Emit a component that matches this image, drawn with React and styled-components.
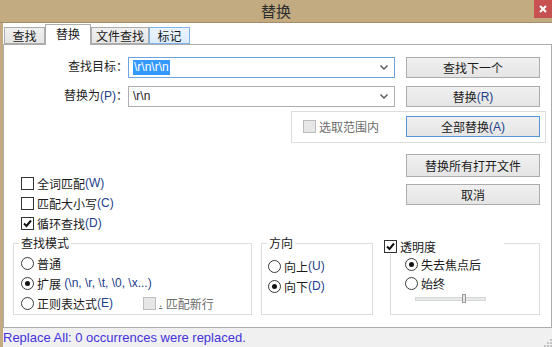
import React from 'react'
import styled, { createGlobalStyle, css } from 'styled-components'

const GlobalStyle = createGlobalStyle`
html, body {
  margin: 0;
  padding: 0;
  background: #fff;
}
body {
  font-family: "Liberation Sans", "Noto Sans CJK SC", sans-serif;
  font-size: 12px;
  color: #1e1e1e;
}
* { box-sizing: border-box; }
`

const Window = styled.div`
width: 552px;
height: 347px;
display: flex;
flex-direction: column;
overflow: hidden;
background: #fff;
`

const TitleBar = styled.div`
flex: none;
height: 23px;
background: #c2ab81;
border-bottom: 1px solid #a48e67;
display: grid;
grid-template-columns: 1fr auto 1fr;
align-items: start;
`

const Title = styled.div`
grid-column: 2;
font-family: "Noto Sans CJK SC", sans-serif;
font-size: 15px;
line-height: 22px;
color: #2e2e2e;
`

const CloseButton = styled.div`
grid-column: 3;
justify-self: end;
width: 18px;
height: 18px;
background: #c75050;
display: flex;
align-items: center;
justify-content: center;
`

const Body = styled.div`
flex: 1;
display: flex;
min-height: 0;
`

const LeftEdge = styled.div`
flex: none;
width: 3px;
background: #c2ab81;
`

const Main = styled.div`
flex: 1;
display: flex;
flex-direction: column;
`

const TabStrip = styled.div`
flex: none;
height: 21px;
display: flex;
align-items: flex-end;
padding-left: 1px;
`

const Tab = styled.div`
position: relative;
width: ${p => p.w}px;
height: ${p => (p.active ? 21 : 17)}px;
margin-bottom: ${p => (p.active ? -1 : 0)}px;
border: 1px solid #acacac;
border-bottom: ${p => (p.active ? 'none' : '1px solid #acacac')};
background: linear-gradient(#f0f0f0, #e5e5e5);
font-family: "Noto Sans CJK SC", sans-serif;
font-size: 12px;
line-height: ${p => (p.active ? 17 : 15)}px;
text-align: center;
color: #1a1a1a;
z-index: ${p => (p.active ? 2 : 1)};
${p => p.active && css`
  background: #fff;
`}
${p => p.hover && css`
  background: linear-gradient(#ecf4fc, #dcecfc);
  border-color: #7eb4ea;
`}
`

const Panel = styled.div`
flex: none;
height: 284px;
border: 1px solid #acacac;
padding-top: 12px;
display: flex;
flex-direction: column;
`

const FieldRow = styled.div`
display: flex;
align-items: center;
height: 21px;
margin-top: ${p => p.mt || 0}px;
`

const FieldLabel = styled.div`
width: 124px;
text-align: right;
white-space: nowrap;
line-height: 21px;
`

const Combo = styled.div`
width: 267px;
height: 21px;
border: 1px solid ${p => (p.focused ? '#6fa3df' : '#abadb3')};
display: flex;
align-items: center;
padding: 0 6px 0 4px;
background: #fff;
`

const ComboText = styled.span`
flex: 1;
font-family: "Liberation Sans", sans-serif;
font-size: 12px;
line-height: 15px;
white-space: pre;
${p => p.selected && css`
  flex: none;
  background: #3399ff;
  color: #fff;
  padding: 0 1px;
`}
`

const ComboArrow = styled.svg`
margin-left: auto;
flex: none;
`

const Button = styled.div`
flex: none;
width: 134px;
height: ${p => p.h || 21}px;
margin-left: ${p => p.ml || 0}px;
border: 1px solid ${p => (p.primary ? '#4f97d8' : '#acacac')};
background: linear-gradient(#f0f0f0, #e5e5e5);
display: flex;
align-items: center;
justify-content: center;
white-space: nowrap;
color: #1a1a1a;
`

const Key = styled.span`
color: #22408a;
`

const SelectionGroup = styled.div`
margin: 4px 0 0 287px;
width: 255px;
height: 32px;
border: 1px solid #dcdcdc;
display: grid;
grid-template-columns: 114px 134px;
align-items: center;
padding: 4px 0 5px;
`

const CheckItem = styled.div`
display: flex;
align-items: center;
height: ${p => p.h || 20}px;
padding-left: ${p => p.pl || 0}px;
white-space: nowrap;
color: ${p => (p.disabled ? '#6d6d6d' : '#1a1a1a')};
`

const Box = styled.span`
flex: none;
width: 13px;
height: 13px;
margin-right: 3px;
border: 1px solid ${p => (p.disabled ? '#bcbcbc' : '#333')};
background: ${p => (p.disabled ? '#e6e6e6' : '#fff')};
display: flex;
align-items: center;
justify-content: center;
`

const Radio = styled.span`
flex: none;
width: 13px;
height: 13px;
margin-right: 3px;
border: 1px solid #3a3a3a;
border-radius: 50%;
background: #fff;
display: flex;
align-items: center;
justify-content: center;
&::after {
  content: "";
  display: ${p => (p.checked ? 'block' : 'none')};
  width: 5px;
  height: 5px;
  border-radius: 50%;
  background: #111;
}
`

const MiddleArea = styled.div`
height: 100px;
display: flex;
`

const OptionList = styled.div`
width: 402px;
padding: 30px 0 0 17px;
display: flex;
flex-direction: column;
`

const ButtonStack = styled.div`
padding-top: 11px;
display: flex;
flex-direction: column;
gap: 7px;
`

const GroupRow = styled.div`
height: 72px;
display: flex;
padding-left: 9px;
`

const GroupBox = styled.div`
position: relative;
width: ${p => p.w}px;
height: 72px;
margin-left: ${p => p.ml || 0}px;
border: 1px solid #dcdcdc;
padding: ${p => p.pt}px 0 0 ${p => p.pl}px;
display: flex;
flex-direction: column;
`

const Legend = styled.div`
position: absolute;
top: -7px;
left: 5px;
padding: 0 2px;
background: #fff;
line-height: 14px;
color: #1a1a1a;
`

const CheckLegend = styled.div`
position: absolute;
top: -5px;
left: -7px;
width: 120px;
height: 15px;
background: #fff;
display: flex;
align-items: center;
color: #1a1a1a;
`

const RadioRow = styled.div`
display: ${p => (p.split ? 'grid' : 'flex')};
grid-template-columns: 122px auto;
align-items: center;
height: ${p => p.h || 20}px;
white-space: nowrap;
color: #1a1a1a;
`

const RadioLabel = styled.span`
display: flex;
align-items: center;
`

const SliderTrack = styled.div`
position: relative;
margin: 4px 0 0 10px;
width: 71px;
height: 4px;
background: #e7eaea;
border: 1px solid #d6d6d6;
`

const SliderThumb = styled.div`
position: absolute;
top: -4px;
width: 4px;
height: 9px;
background: #e5e5e5;
border: 1px solid #9a9a9a;
`

const StatusBar = styled.div`
flex: 1;
background: #f0f0f0;
display: flex;
align-items: center;
padding-left: 0;
`

const StatusText = styled.div`
font-family: "Liberation Sans", sans-serif;
font-size: 13px;
color: #4433dd;
white-space: nowrap;
`

const Grip = styled.svg`
margin-left: auto;
align-self: flex-end;
`

const Dot = styled.span`
text-decoration: underline;
`

const Check = () => (
  <svg width="9" height="9" viewBox="0 0 9 9">
    <path d="M1 4.5 L3.5 7 L8 1.5" fill="none" stroke="#111" strokeWidth="2" />
  </svg>
)

const Chevron = () => (
  <ComboArrow width="8" height="5" viewBox="0 0 8 5">
    <path d="M0.5 0.5 L4 4 L7.5 0.5" fill="none" stroke="#555" strokeWidth="1.4" />
  </ComboArrow>
)

const tabs = [
  { label: '查找', w: 41 },
  { label: '替换', w: 46, active: true },
  { label: '文件查找', w: 58 },
  { label: '标记', w: 41, hover: true },
]

export default function App() {
  return (
    <Window>
      <GlobalStyle />
      <TitleBar>
        <Title>替换</Title>
        <CloseButton>
          <svg width="8" height="8" viewBox="0 0 8 8">
            <path d="M1 1 L7 7 M7 1 L1 7" stroke="#fff" strokeWidth="2" />
          </svg>
        </CloseButton>
      </TitleBar>
      <Body>
        <LeftEdge />
        <Main>
          <TabStrip>
            {tabs.map(t => (
              <Tab key={t.label} w={t.w} active={t.active} hover={t.hover}>{t.label}</Tab>
            ))}
          </TabStrip>
          <Panel>
            <FieldRow>
              <FieldLabel>查找目标：</FieldLabel>
              <Combo focused>
                <ComboText selected>{'\\r\\n\\r\\n'}</ComboText>
                <Chevron />
              </Combo>
              <Button ml={11}>查找下一个</Button>
            </FieldRow>
            <FieldRow mt={8}>
              <FieldLabel>替换为<Key>(P)</Key>：</FieldLabel>
              <Combo>
                <ComboText>{'\\r\\n'}</ComboText>
                <Chevron />
              </Combo>
              <Button ml={11}>替换<Key>(R)</Key></Button>
            </FieldRow>
            <SelectionGroup>
              <CheckItem disabled pl={11}><Box disabled />选取范围内</CheckItem>
              <Button primary>全部替换<Key>(A)</Key></Button>
            </SelectionGroup>
            <MiddleArea>
              <OptionList>
                <CheckItem><Box />全词匹配<Key>(W)</Key></CheckItem>
                <CheckItem><Box />匹配大小写<Key>(C)</Key></CheckItem>
                <CheckItem><Box><Check /></Box>循环查找<Key>(D)</Key></CheckItem>
              </OptionList>
              <ButtonStack>
                <Button h={23}>替换所有打开文件</Button>
                <Button>取消</Button>
              </ButtonStack>
            </MiddleArea>
            <GroupRow>
              <GroupBox w={239} pt={9} pl={7}>
                <Legend>查找模式</Legend>
                <RadioRow><Radio />普通</RadioRow>
                <RadioRow><Radio checked />扩展 <Key>&nbsp;(\n, \r, \t, \0, \x...)</Key></RadioRow>
                <RadioRow split>
                  <RadioLabel><Radio />正则表达式<Key>(E)</Key></RadioLabel>
                  <CheckItem disabled><Box disabled /><Dot>.</Dot>&nbsp;匹配新行</CheckItem>
                </RadioRow>
              </GroupBox>
              <GroupBox w={112} ml={9} pt={12} pl={6}>
                <Legend>方向</Legend>
                <RadioRow><Radio />向上<Key>(U)</Key></RadioRow>
                <RadioRow><Radio checked />向下<Key>(D)</Key></RadioRow>
              </GroupBox>
              <GroupBox w={150} ml={17} pt={10} pl={14}>
                <CheckLegend><Box><Check /></Box>透明度</CheckLegend>
                <RadioRow><Radio checked />失去焦点后</RadioRow>
                <RadioRow h={19}><Radio />始终</RadioRow>
                <SliderTrack>
                  <SliderThumb style={{ left: `${(47 / 71) * 100}%` }} />
                </SliderTrack>
              </GroupBox>
            </GroupRow>
          </Panel>
          <StatusBar>
            <StatusText>Replace All: 0 occurrences were replaced.</StatusText>
            <Grip width="8" height="8" viewBox="0 0 8 8">
              <rect x="6" y="0" width="2" height="2" fill="#c3c3c3" />
              <rect x="3" y="3" width="2" height="2" fill="#c3c3c3" />
              <rect x="6" y="3" width="2" height="2" fill="#c3c3c3" />
              <rect x="0" y="6" width="2" height="2" fill="#c3c3c3" />
              <rect x="3" y="6" width="2" height="2" fill="#c3c3c3" />
              <rect x="6" y="6" width="2" height="2" fill="#c3c3c3" />
            </Grip>
          </StatusBar>
        </Main>
      </Body>
    </Window>
  )
}
